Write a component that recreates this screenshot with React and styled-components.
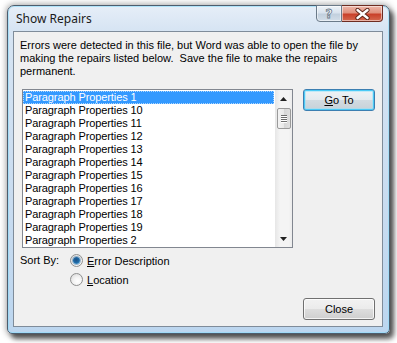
import React from "react";
import styled, { createGlobalStyle } from "styled-components";

const Global = createGlobalStyle`
  html, body { margin: 0; padding: 0; background: #ffffff; }
  body { width: 397px; height: 343px; overflow: hidden; }
`;

const Page = styled.div`
  width: 397px;
  height: 343px;
  box-sizing: border-box;
  padding: 5px 0 0 7px;
`;

const Window = styled.div`
  width: 383px;
  height: 329px;
  box-sizing: border-box;
  border: 1px solid #4d5d6e;
  border-radius: 7px 7px 5px 5px;
  background: linear-gradient(to bottom, #e6eef8 0px, #d6e4f3 25px, #c9dcf0 60%, #bcd6ef 100%);
  box-shadow: inset 0 0 0 1px rgba(140, 220, 250, 0.6), 0 0 6px 1px rgba(0, 0, 0, 0.35),
    4px 5px 5px rgba(0, 0, 0, 0.6);
  display: flex;
  flex-direction: column;
`;

const TitleBar = styled.div`
  height: 25px;
  display: flex;
  align-items: flex-start;
  padding: 0 6px 0 8px;
`;

const Title = styled.div`
  flex: 1;
  font-family: "Noto Sans", "Liberation Sans", sans-serif;
  font-size: 12px;
  color: #1a1a1a;
  line-height: 14px;
  padding-top: 6px;
`;

const Caption = styled.div`
  display: flex;
  margin-top: -1px;
`;

const CaptionButton = styled.div`
  height: 17px;
  width: ${(p) => p.$w}px;
  box-sizing: border-box;
  border: 1px solid ${(p) => (p.$close ? "#6e2c22" : "#6b7a89")};
  border-left: ${(p) => (p.$close ? "none" : undefined)};
  border-radius: ${(p) => (p.$close ? "0 0 4px 0" : "0 0 0 4px")};
  background: ${(p) =>
    p.$close
      ? "linear-gradient(to bottom, #eeb7aa 0%, #e0917e 45%, #c9402a 55%, #d56a50 100%)"
      : "linear-gradient(to bottom, #eef3f8 0%, #d9e3ee 45%, #c2d0de 55%, #d3dee9 100%)"};
  box-shadow: inset 0 0 0 1px rgba(255, 255, 255, 0.5);
  display: flex;
  align-items: center;
  justify-content: center;
`;

const HelpGlyph = styled.span`
  font-family: "DejaVu Sans", sans-serif;
  font-weight: bold;
  font-size: 12px;
  line-height: 12px;
  color: #ffffff;
  -webkit-text-stroke: 0.8px #6a7888;
`;

const Content = styled.div`
  margin: 0 6px 6px 5px;
  flex: 1;
  box-sizing: border-box;
  border: 1px solid #7f8c9a;
  background: #f0f0f0;
  display: flex;
  flex-direction: column;
  font-family: "Liberation Sans", Arial, sans-serif;
  font-size: 11px;
  color: #000;
`;

const Description = styled.p`
  margin: 7px 0 0 6px;
  width: 360px;
  line-height: 13px;
  height: 39px;
  white-space: pre-wrap;
`;

const MainRow = styled.div`
  margin-top: 11px;
  padding: 0 7px 0 8px;
  display: flex;
  gap: 10px;
  align-items: flex-start;
`;

const ListBox = styled.div`
  width: 271px;
  height: 159px;
  box-sizing: border-box;
  border: 1px solid #828790;
  background: #ffffff;
  display: flex;
`;

const Items = styled.div`
  flex: 1;
  padding: 1px 1px 0 0;
  overflow: hidden;
`;

const Item = styled.div`
  height: 13px;
  line-height: 13px;
  padding-left: 2px;
  white-space: nowrap;
  letter-spacing: -0.1px;
  background: ${(p) => (p.$selected ? "#3399ff" : "transparent")};
  color: ${(p) => (p.$selected ? "#ffffff" : "#000000")};
  outline: ${(p) => (p.$selected ? "1px dotted rgba(255,255,255,0.6)" : "none")};
  outline-offset: -1px;
`;

const ScrollBar = styled.div`
  width: 17px;
  display: flex;
  flex-direction: column;
  align-items: center;
  background: linear-gradient(to right, #e6e6e6 0%, #f4f4f4 30%, #f4f4f4 80%, #ececec 100%);
`;

const Arrow = styled.div`
  height: 17px;
  width: 17px;
  display: flex;
  align-items: center;
  justify-content: center;
`;

const Track = styled.div`
  flex: 1;
  width: 100%;
  display: flex;
  flex-direction: column;
  align-items: center;
`;

const Thumb = styled.div`
  margin-top: 1px;
  width: 14px;
  height: 21px;
  box-sizing: border-box;
  border: 1px solid #9a9a9a;
  border-radius: 2px;
  background: linear-gradient(to right, #f3f3f3 0%, #e8e8e8 50%, #d6d6d6 51%, #e0e0e0 100%);
  display: flex;
  flex-direction: column;
  align-items: center;
  justify-content: center;
  gap: 1px;
`;

const Grip = styled.div`
  width: 6px;
  height: 1px;
  background: #6d6d6d;
  box-shadow: 0 1px 0 #ffffff;
`;

const ButtonColumn = styled.div`
  display: flex;
  flex-direction: column;
`;

const Button = styled.div`
  width: 72px;
  height: 22px;
  box-sizing: border-box;
  border: 1px solid ${(p) => (p.$default ? "#3c7fb1" : "#707070")};
  border-radius: 3px;
  background: ${(p) =>
    p.$default
      ? "linear-gradient(to bottom, #eef3f6 0%, #e4eaee 50%, #d2dbe1 51%, #c7d1d8 100%)"
      : "linear-gradient(to bottom, #f2f2f2 0%, #ebebeb 50%, #dddddd 51%, #cfcfcf 100%)"};
  box-shadow: inset 0 0 0 1px
      ${(p) => (p.$default ? "rgba(70, 200, 245, 0.95)" : "rgba(255,255,255,0.75)")},
    inset 0 0 0 2px ${(p) => (p.$default ? "rgba(150, 225, 250, 0.5)" : "transparent")};
  display: flex;
  align-items: center;
  justify-content: center;
  line-height: 13px;
  color: #000;
`;

const Mn = styled.span`
  text-decoration: underline;
  text-underline-offset: 1px;
`;

const SortArea = styled.div`
  margin-top: 3px;
  padding-left: 6px;
  display: flex;
  align-items: flex-start;
`;

const SortLabel = styled.div`
  width: 50px;
  height: 19px;
  line-height: 19px;
`;

const Radios = styled.div`
  display: flex;
  flex-direction: column;
`;

const RadioRow = styled.div`
  height: 19px;
  display: flex;
  align-items: center;
  gap: 4px;
`;

const RadioCircle = styled.div`
  width: 13px;
  height: 13px;
  box-sizing: border-box;
  border-radius: 50%;
  border: 1px solid #8e8f8f;
  background: radial-gradient(circle at 60% 65%, #ffffff 0%, #f4f4f4 40%, #d4d4d4 100%);
  display: flex;
  align-items: center;
  justify-content: center;
`;

const RadioDot = styled.div`
  width: 7px;
  height: 7px;
  border-radius: 50%;
  background: radial-gradient(circle at 45% 40%, #1b4f84 0%, #1f6aa6 50%, #5fb6ea 100%);
  box-shadow: 0 0 0 1px rgba(40, 100, 150, 0.45);
`;

const Footer = styled.div`
  margin-top: 9px;
  padding-right: 7px;
  display: flex;
  justify-content: flex-end;
`;

const items = [
  "1", "10", "11", "12", "13", "14", "15", "16", "17", "18", "19", "2",
];

function Radio({ checked, children }) {
  return (
    <RadioRow>
      <RadioCircle>{checked && <RadioDot />}</RadioCircle>
      <span>{children}</span>
    </RadioRow>
  );
}

export default function App() {
  return (
    <>
      <Global />
      <Page>
        <Window>
          <TitleBar>
            <Title>Show Repairs</Title>
            <Caption>
              <CaptionButton $w={26}>
                <HelpGlyph>?</HelpGlyph>
              </CaptionButton>
              <CaptionButton $w={41} $close>
                <svg width="15" height="12" viewBox="0 0 15 12">
                  <path d="M2.5 2 L12.5 10 M12.5 2 L2.5 10" stroke="#5a2318" strokeWidth="4.2" strokeLinecap="round" />
                  <path d="M2.5 2 L12.5 10 M12.5 2 L2.5 10" stroke="#ffffff" strokeWidth="2.4" strokeLinecap="round" />
                </svg>
              </CaptionButton>
            </Caption>
          </TitleBar>
          <Content>
            <Description>
              {"Errors were detected in this file, but Word was able to open the file by making the repairs listed below.  Save the file to make the repairs permanent."}
            </Description>
            <MainRow>
              <ListBox>
                <Items>
                  {items.map((n, i) => (
                    <Item key={n} $selected={i === 0}>
                      Paragraph Properties {n}
                    </Item>
                  ))}
                </Items>
                <ScrollBar>
                  <Arrow>
                    <svg width="7" height="4" viewBox="0 0 7 4">
                      <path d="M0 4 L3.5 0 L7 4 Z" fill="#222" />
                    </svg>
                  </Arrow>
                  <Track>
                    <Thumb>
                      <Grip />
                      <Grip />
                      <Grip />
                      <Grip />
                    </Thumb>
                  </Track>
                  <Arrow>
                    <svg width="7" height="4" viewBox="0 0 7 4">
                      <path d="M0 0 L7 0 L3.5 4 Z" fill="#222" />
                    </svg>
                  </Arrow>
                </ScrollBar>
              </ListBox>
              <ButtonColumn>
                <Button $default>
                  <span>
                    <Mn>G</Mn>o To
                  </span>
                </Button>
              </ButtonColumn>
            </MainRow>
            <SortArea>
              <SortLabel>Sort By:</SortLabel>
              <Radios>
                <Radio checked>
                  <Mn>E</Mn>rror Description
                </Radio>
                <Radio>
                  <Mn>L</Mn>ocation
                </Radio>
              </Radios>
            </SortArea>
            <Footer>
              <Button>Close</Button>
            </Footer>
          </Content>
        </Window>
      </Page>
    </>
  );
}
